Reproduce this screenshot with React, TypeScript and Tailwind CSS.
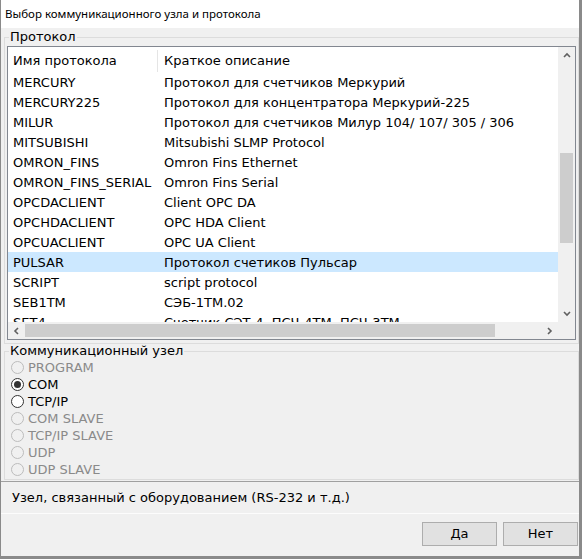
import React from 'react'

const rows: [string, string][] = [
  ['MERCURY', 'Протокол для счетчиков Меркурий'],
  ['MERCURY225', 'Протокол для концентратора Меркурий-225'],
  ['MILUR', 'Протокол для счетчиков Милур 104/ 107/ 305 / 306'],
  ['MITSUBISHI', 'Mitsubishi SLMP Protocol'],
  ['OMRON_FINS', 'Omron Fins Ethernet'],
  ['OMRON_FINS_SERIAL', 'Omron Fins Serial'],
  ['OPCDACLIENT', 'Client OPC DA'],
  ['OPCHDACLIENT', 'OPC HDA Client'],
  ['OPCUACLIENT', 'OPC UA Client'],
  ['PULSAR', 'Протокол счетиков Пульсар'],
  ['SCRIPT', 'script protocol'],
  ['SEB1TM', 'СЭБ-1ТМ.02'],
  ['SET4', 'Счетчик СЭТ-4, ПСЧ-4ТМ, ПСЧ-3ТМ'],
]

const nodes: { label: string; enabled: boolean; checked?: boolean }[] = [
  { label: 'PROGRAM', enabled: false },
  { label: 'COM', enabled: true, checked: true },
  { label: 'TCP/IP', enabled: true },
  { label: 'COM SLAVE', enabled: false },
  { label: 'TCP/IP SLAVE', enabled: false },
  { label: 'UDP', enabled: false },
  { label: 'UDP SLAVE', enabled: false },
]

const ui = { fontFamily: '"DejaVu Sans", Verdana, sans-serif' }

function Chevron({ dir }: { dir: 'up' | 'down' | 'left' | 'right' }) {
  const pts = {
    up: '1,5 4,2 7,5',
    down: '1,2 4,5 7,2',
    left: '5,1 2,4 5,7',
    right: '2,1 5,4 2,7',
  }[dir]
  return (
    <svg width="8" height="8" viewBox="0 0 8 8">
      <polyline points={pts} fill="none" stroke="#606060" strokeWidth="1.6" />
    </svg>
  )
}

function Radio({ enabled, checked }: { enabled: boolean; checked?: boolean }) {
  return (
    <span
      className={`flex h-[13px] w-[13px] shrink-0 items-center justify-center rounded-full border ${
        enabled ? 'border-[#333333] bg-white' : 'border-[#bcbcbc] bg-[#f0f0f0]'
      }`}
    >
      {checked && <span className="h-[7px] w-[7px] rounded-full bg-[#333333]" />}
    </span>
  )
}

export default function App() {
  return (
    <div
      className="flex h-[559px] w-[582px] flex-col border-b-[3px] border-l border-r-[3px] border-[#8a8a8a] bg-[#f0f0f0] text-[13px] text-black"
      style={ui}
    >
      <div
        className="flex h-[28px] shrink-0 items-center bg-white pl-[4px] text-[11.5px]"
        style={{ fontFamily: '"Noto Sans", sans-serif' }}
      >
        Выбор коммуникационного узла и протокола
      </div>

      <fieldset className="mt-[2px] ml-[3px] mr-0 border border-[#dcdcdc] px-[2px] pt-[2px] pb-[3px]">
        <legend className="ml-[2px] px-[1px] leading-[14px]">Протокол</legend>
        <div className="flex h-[294px] flex-col border border-[#828790] bg-white">
          <div className="flex min-h-0 flex-1">
            <div className="flex min-w-0 flex-1 flex-col overflow-hidden">
              <div className="flex h-[25px] shrink-0 items-center pt-[2px]">
                <div className="w-[149px] shrink-0 pl-[5px] whitespace-nowrap">Имя протокола</div>
                <div className="h-[22px] w-px bg-[#e5e5e5]" />
                <div className="pl-[6px] whitespace-nowrap">Краткое описание</div>
              </div>
              {rows.map(([name, desc]) => (
                <div
                  key={name}
                  className={`flex h-[20px] shrink-0 items-center pt-[1px] ${name === 'PULSAR' ? 'bg-[#cce8ff]' : ''}`}
                >
                  <div className="w-[150px] shrink-0 pl-[5px] whitespace-nowrap">{name}</div>
                  <div className="pl-[6px] whitespace-nowrap">{desc}</div>
                </div>
              ))}
            </div>
            <div className="flex w-[17px] shrink-0 flex-col bg-[#f0f0f0]">
              <div className="flex h-[17px] items-center justify-center">
                <Chevron dir="up" />
              </div>
              <div className="flex-1 px-[2px]">
                <div className="mt-[89px] h-[90px] bg-[#cdcdcd]" />
              </div>
              <div className="flex h-[17px] items-center justify-center">
                <Chevron dir="down" />
              </div>
            </div>
          </div>
          <div className="flex h-[17px] shrink-0">
            <div className="flex flex-1 items-center bg-[#f0f0f0]">
              <div className="flex h-[17px] w-[17px] items-center justify-center">
                <Chevron dir="left" />
              </div>
              <div className="flex-1 py-[2px]">
                <div className="h-[13px] w-[470px] bg-[#cdcdcd]" />
              </div>
              <div className="flex h-[17px] w-[17px] items-center justify-center">
                <Chevron dir="right" />
              </div>
            </div>
            <div className="w-[17px] bg-[#f0f0f0]" />
          </div>
        </div>
      </fieldset>

      <fieldset className="ml-[3px] mr-0 border border-[#dcdcdc] pb-[2px]">
        <legend className="ml-[4px] px-[1px] leading-[14px]">Коммуникационный узел</legend>
        <div className="pl-[6px]">
          {nodes.map((n) => (
            <div key={n.label} className="flex h-[17px] items-center gap-[4px] pt-[2px]">
              <Radio enabled={n.enabled} checked={n.checked} />
              <span className={n.enabled ? 'text-black' : 'text-[#8a8a8a]'}>{n.label}</span>
            </div>
          ))}
        </div>
      </fieldset>

      <div className="mt-[1px] flex h-[33px] shrink-0 items-center border-t border-b border-t-[#a0a0a0] border-b-[#fcfcfc] pl-[11px]">
        Узел, связанный с оборудованием (RS-232 и т.д.)
      </div>

      <div className="flex flex-1 items-start justify-end gap-[6px] pt-[8px] pr-[1px]">
        <button className="h-[24px] w-[75px] border border-[#adadad] bg-[#e1e1e1]" style={ui}>
          Да
        </button>
        <button className="h-[24px] w-[75px] border border-[#adadad] bg-[#e1e1e1]" style={ui}>
          Нет
        </button>
      </div>
    </div>
  )
}
